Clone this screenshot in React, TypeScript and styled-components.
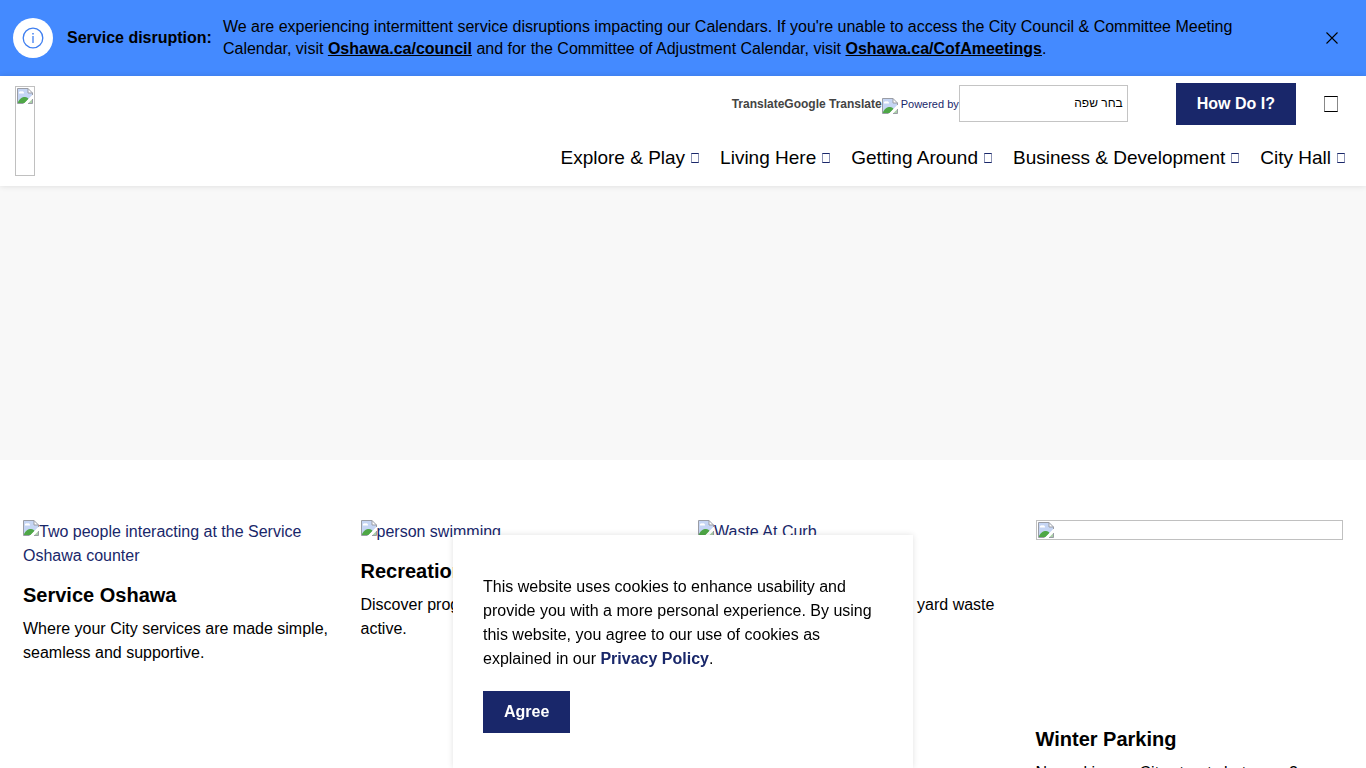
import React, { useState } from "react";
import styled, { createGlobalStyle } from "styled-components";

const navy = "#19276a";

const GlobalStyle = createGlobalStyle`
  *, *::before, *::after { box-sizing: border-box; }
  body {
    margin: 0;
    background: #fff;
    color: #000;
    font-family: "Liberation Sans", Arial, sans-serif;
    font-size: 16px;
    line-height: 24px;
  }
  a { color: ${navy}; text-decoration: none; }
`;

const Alert = styled.section`
  display: flex;
  align-items: center;
  min-height: 76px;
  padding: 0 24px 0 13px;
  background: #448aff;
  line-height: 22px;
`;

const AlertIcon = styled.span`
  display: flex;
  align-items: center;
  justify-content: center;
  flex: none;
  width: 40px;
  height: 40px;
  margin-right: 14px;
  border-radius: 50%;
  background: #fff;
`;

const AlertLabel = styled.strong`
  flex: none;
  margin-right: 11px;
`;

const AlertText = styled.p`
  flex: 1;
  margin: 0;
  a { color: #000; font-weight: bold; text-decoration: underline; }
`;

const IconButton = styled.button`
  display: flex;
  align-items: center;
  justify-content: center;
  flex: none;
  padding: 0;
  border: 0;
  background: none;
  cursor: pointer;
`;

const CloseButton = styled(IconButton)`
  width: 20px;
  height: 20px;
  margin-left: 48px;
`;

const Header = styled.header`
  position: relative;
  display: flex;
  justify-content: space-between;
  min-height: 110px;
  padding: 7px 21px 10px 15px;
  background: #fff;
  box-shadow: 0 0 6px rgba(0, 0, 0, 0.12);
`;

const LogoLink = styled.a`
  display: block;
  width: 20px;
  height: 90px;
  margin-top: 3px;
  padding: 1px;
  border: 1px solid #c0c0c0;
`;

const HeaderMain = styled.div`
  display: flex;
  flex-direction: column;
  align-items: flex-end;
`;

const Tools = styled.div`
  display: flex;
  align-items: center;
  height: 42px;
`;

const TranslateLabel = styled.label`
  color: #444;
  font-size: 12px;
  font-weight: bold;
`;

const PoweredBy = styled.a`
  display: flex;
  align-items: center;
  font-size: 11px;
  svg { margin: 4px 3px 0 0; }
`;

const LanguageSelect = styled.select`
  appearance: none;
  width: 169px;
  height: 37px;
  margin: 0 48px 2px 0;
  padding: 0 4px;
  border: 1px solid #c4c4c4;
  border-radius: 0;
  background: #fff;
  color: #000;
  font-family: "Liberation Sans", Arial, sans-serif;
  font-size: 12px;
`;

const PrimaryButton = styled.button`
  height: 42px;
  padding: 0 20px;
  border: 1px solid ${navy};
  background: ${navy};
  color: #fff;
  font-family: inherit;
  font-size: 16px;
  font-weight: bold;
  cursor: pointer;
`;

const SearchButton = styled(IconButton)`
  width: 28px;
  height: 28px;
  margin-left: 21px;
`;

const EmptyGlyph = styled.span<{ $large?: boolean }>`
  display: inline-block;
  width: ${(p) => (p.$large ? 14 : 8)}px;
  height: ${(p) => (p.$large ? 16 : 10)}px;
  border: 1px solid ${(p) => (p.$large ? "#000" : navy)};
  border-left-color: ${(p) => (p.$large ? "#888" : "#8c93b4")};
  border-right-color: ${(p) => (p.$large ? "#888" : "#8c93b4")};
`;

const Nav = styled.nav`
  margin-top: 21px;
  ul {
    display: flex;
    gap: 21px;
    margin: 0;
    padding: 0;
    list-style: none;
  }
  a {
    display: flex;
    align-items: center;
    gap: 6px;
    color: #000;
    font-size: 19px;
  }
`;

const Hero = styled.section`
  height: 274px;
  background: #f8f8f8;
`;

const Cards = styled.main`
  display: grid;
  grid-template-columns: repeat(4, 1fr);
  gap: 30px;
  padding: 60px 23px;
`;

const Media = styled.a`
  display: block;
`;

const EmptyMedia = styled(Media)`
  aspect-ratio: 8 / 5;
`;

const EmptyFrame = styled.span`
  display: block;
  height: 20px;
  padding: 1px;
  border: 1px solid #c0c0c0;
`;

const CardTitle = styled.h2`
  margin: 13px 0 8px;
  font-size: 20px;
  line-height: 28px;
`;

const CardText = styled.p`
  margin: 0;
`;

const CookieNotice = styled.aside`
  position: fixed;
  bottom: 0;
  left: 50%;
  width: 460px;
  max-width: 100%;
  padding: 40px 30px 35px;
  transform: translateX(-50%);
  background: #fff;
  box-shadow: 0 0 6px rgba(0, 0, 0, 0.12);
  p { margin: 0 0 20px; }
  a { font-weight: bold; }
`;

const BrokenIconSvg = styled.svg`
  display: block;
  flex: none;
`;

const InlineBroken = styled(BrokenIconSvg)`
  display: inline-block;
  vertical-align: 1px;
`;

function BrokenIcon({ inline = false }: { inline?: boolean }) {
  const Svg = inline ? InlineBroken : BrokenIconSvg;
  return (
    <Svg width="16" height="16" viewBox="0 0 16 16" aria-hidden="true">
      <path d="M0.5 0.5H11L15.5 5V7L7 15.5H0.5Z" fill="#c5d5f4" />
      <path d="M2 5.5a1.5 1.5 0 0 1 2-2a2 2 0 0 1 3 2Z" fill="#fff" />
      <path d="M1 14.5C2 11 5 9 8 9C10 9 11 10 11.5 11L8 15H1Z" fill="#4ea746" />
      <path d="M6.5 16L15.5 7V10L10 16Z" fill="#fff" />
      <path d="M11 15.5L15.5 11V15.5Z" fill="#a9cfa6" />
      <path d="M11 0.5V5H15.5Z" fill="#fff" />
      <path
        d="M6.5 15.5H0.5V0.5H11L15.5 5V7M11 0.5V5H15.5M15.5 11V15.5H11"
        fill="none"
        stroke="#9a9da5"
      />
    </Svg>
  );
}

const navItems = [
  "Explore & Play",
  "Living Here",
  "Getting Around",
  "Business & Development",
  "City Hall",
];

const cards = [
  {
    alt: "Two people interacting at the Service Oshawa counter",
    title: "Service Oshawa",
    text: "Where your City services are made simple, seamless and supportive.",
  },
  {
    alt: "person swimming",
    title: "Recreation",
    text: "Discover programs and ways to stay active.",
  },
  {
    alt: "Waste At Curb",
    title: "Waste Collection",
    text: "Track your garbage, recycling, yard waste and more.",
  },
  {
    alt: "",
    title: "Winter Parking",
    text: "No parking on City streets between 2 a.m. and 6 a.m.",
  },
];

export default function App() {
  const [alertOpen, setAlertOpen] = useState(true);
  const [cookiesOpen, setCookiesOpen] = useState(true);

  return (
    <>
      <GlobalStyle />
      {alertOpen && (
        <Alert>
          <AlertIcon>
            <svg width="22" height="22" viewBox="0 0 22 22" fill="none" stroke="#3f7ff0" aria-hidden="true">
              <circle cx="11" cy="11" r="9.8" strokeWidth="1.3" />
              <path d="M11 9V16" strokeWidth="1.3" />
              <path d="M11 6V7.5" strokeWidth="1.5" />
            </svg>
          </AlertIcon>
          <AlertLabel>Service disruption:</AlertLabel>
          <AlertText>
            We are experiencing intermittent service disruptions impacting our Calendars. If you're
            unable to access the City Council &amp; Committee Meeting Calendar, visit{" "}
            <a href="#council">Oshawa.ca/council</a> and for the Committee of Adjustment Calendar,
            visit <a href="#cofa">Oshawa.ca/CofAmeetings</a>.
          </AlertText>
          <CloseButton aria-label="Close alert" onClick={() => setAlertOpen(false)}>
            <svg width="12" height="12" viewBox="0 0 12 12" stroke="#000" strokeWidth="1.1" aria-hidden="true">
              <path d="M0.5 0.5L11.5 11.5M11.5 0.5L0.5 11.5" />
            </svg>
          </CloseButton>
        </Alert>
      )}
      <Header>
        <LogoLink href="#home" aria-label="Home">
          <BrokenIcon />
        </LogoLink>
        <HeaderMain>
          <Tools>
            <TranslateLabel htmlFor="language">TranslateGoogle Translate</TranslateLabel>
            <PoweredBy href="#translate">
              <BrokenIcon />
              Powered by
            </PoweredBy>
            <LanguageSelect id="language" dir="rtl" defaultValue="">
              <option value="">בחר שפה</option>
            </LanguageSelect>
            <PrimaryButton>How Do I?</PrimaryButton>
            <SearchButton aria-label="Search">
              <EmptyGlyph $large />
            </SearchButton>
          </Tools>
          <Nav aria-label="Main">
            <ul>
              {navItems.map((item) => (
                <li key={item}>
                  <a href="#menu">
                    {item}
                    <EmptyGlyph />
                  </a>
                </li>
              ))}
            </ul>
          </Nav>
        </HeaderMain>
      </Header>
      <Hero />
      <Cards>
        {cards.map((card) => (
          <article key={card.title}>
            {card.alt ? (
              <Media href="#card">
                <BrokenIcon inline />
                {card.alt}
              </Media>
            ) : (
              <EmptyMedia href="#card" aria-label={card.title}>
                <EmptyFrame>
                  <BrokenIcon />
                </EmptyFrame>
              </EmptyMedia>
            )}
            <CardTitle>{card.title}</CardTitle>
            <CardText>{card.text}</CardText>
          </article>
        ))}
      </Cards>
      {cookiesOpen && (
        <CookieNotice aria-label="Cookie notice">
          <p>
            This website uses cookies to enhance usability and provide you with a more personal
            experience. By using this website, you agree to our use of cookies as explained in our{" "}
            <a href="#privacy">Privacy Policy</a>.
          </p>
          <PrimaryButton onClick={() => setCookiesOpen(false)}>Agree</PrimaryButton>
        </CookieNotice>
      )}
    </>
  );
}
